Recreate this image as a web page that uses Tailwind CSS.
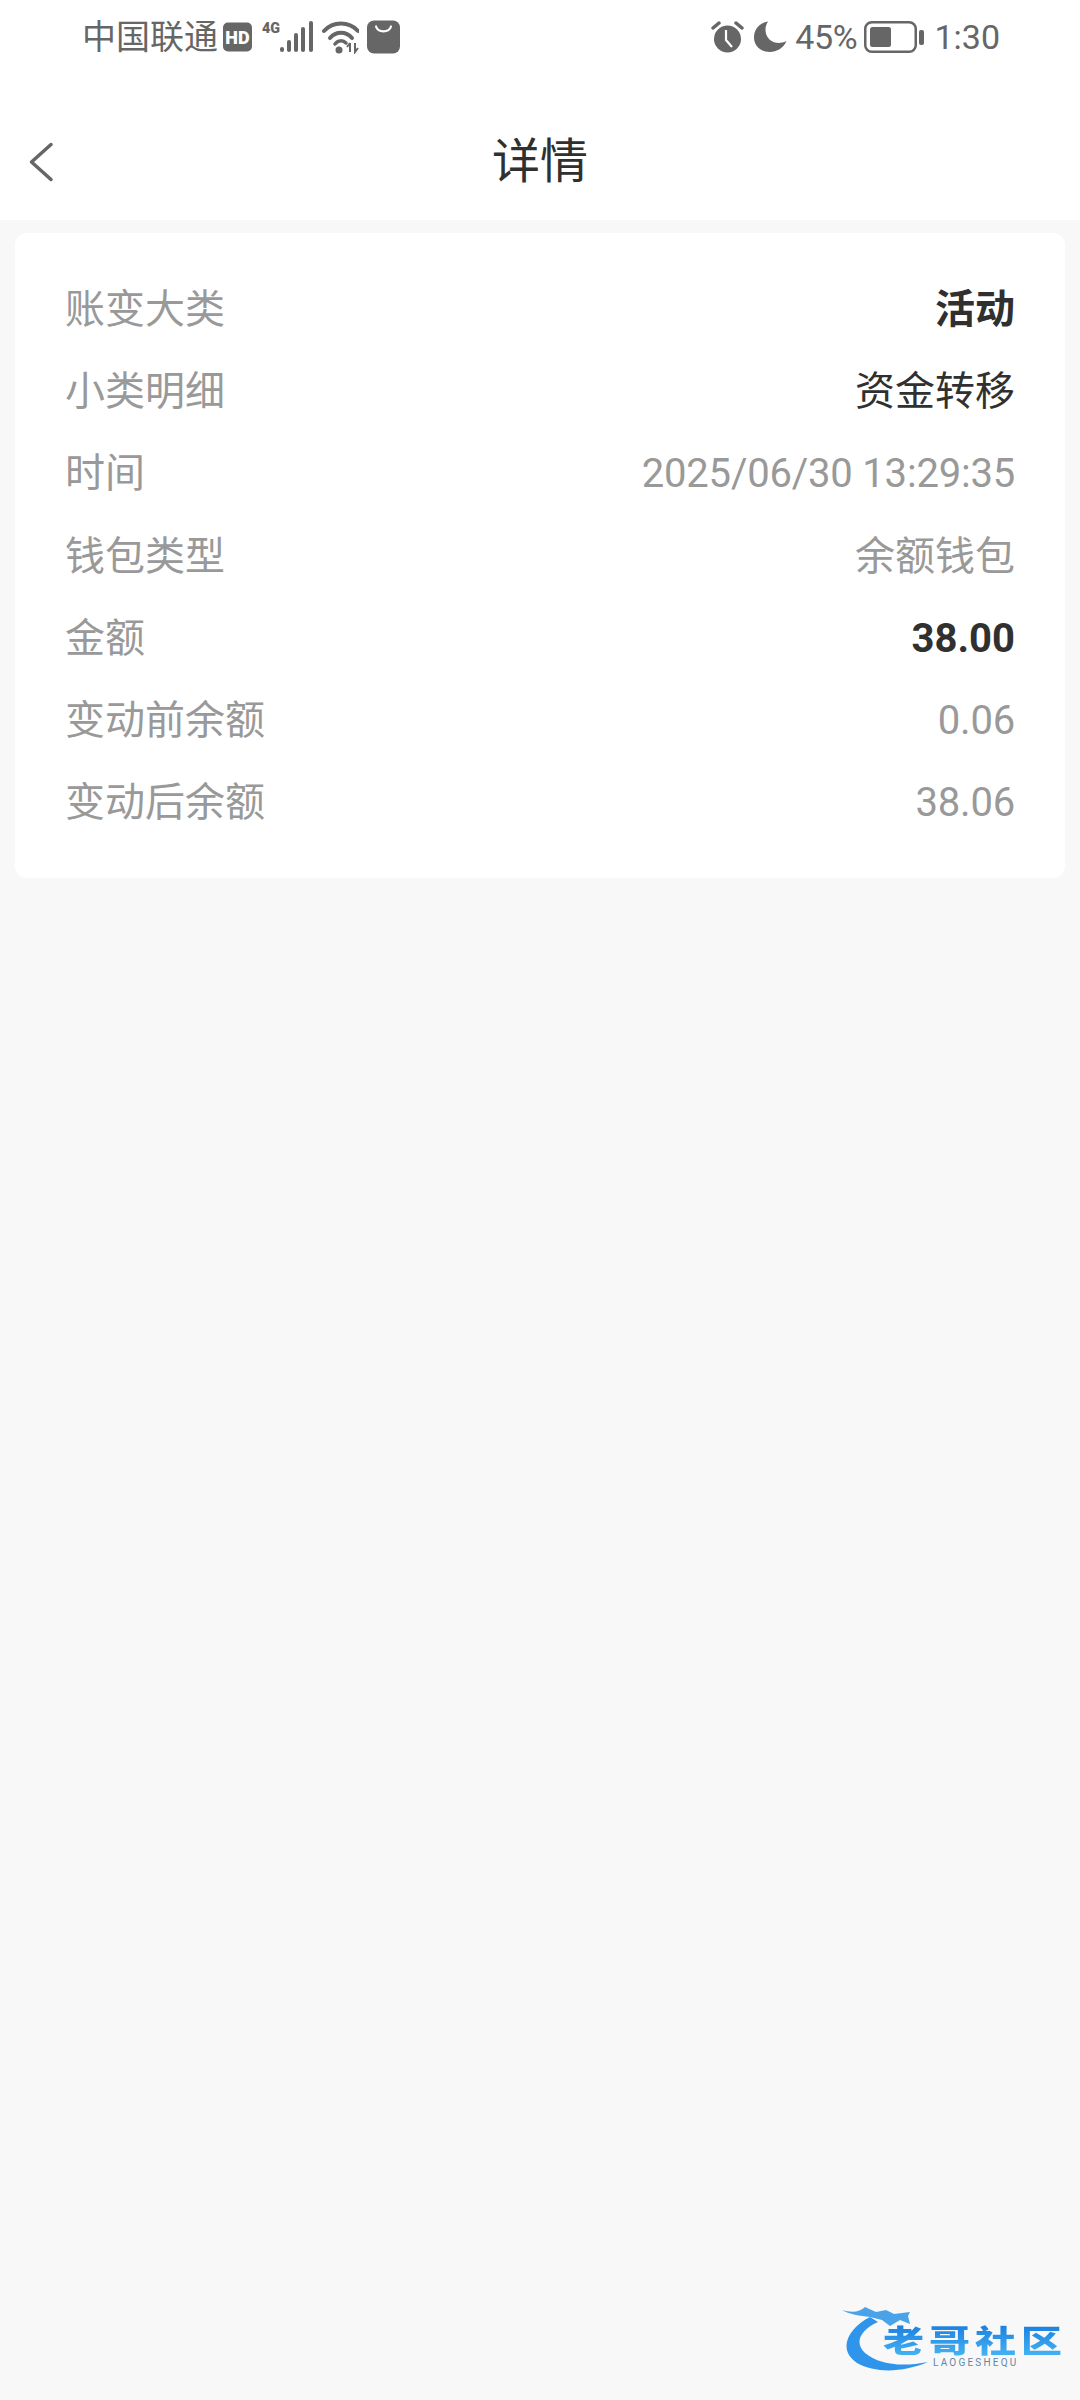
<!DOCTYPE html>
<html lang="zh-CN">
<head>
    <meta charset="UTF-8">
    <meta name="viewport" content="width=device-width, initial-scale=1.0">
    <title>详情</title>
    <script src="https://cdn.jsdelivr.net/npm/@tailwindcss/browser@4"></script>
</head>
<body class="bg-[#f8f8f8] font-['Roboto','Noto_Sans_CJK_SC',sans-serif]">
    <div class="relative h-[2400px] w-[1080px] overflow-hidden">
        <!-- Status bar + title -->
        <header class="h-[220px] bg-white">
            <div class="flex h-[74px] items-center justify-between pl-[82px] pr-[80px] text-[34px] text-[#666666]">
                <div class="flex items-center">
                    <span class="w-[136px] whitespace-nowrap leading-none">中国联通</span>
                    <svg class="ml-[5px]" width="29" height="30" viewBox="0 0 29 30">
                        <rect width="29" height="29" y="0.5" rx="5" fill="#666666"/>
                        <text x="14.5" y="21.500" text-anchor="middle" font-size="18" font-weight="900" font-family="Roboto" fill="#ffffff">HD</text>
                    </svg>
                    <svg class="ml-[10px]" width="52" height="34" viewBox="0 0 52 34">
                        <text x="0" y="13" font-size="15" font-weight="900" font-family="Roboto" textLength="18" lengthAdjust="spacingAndGlyphs" fill="#666666">4G</text>
                        <g stroke="#666666" stroke-width="4" stroke-linecap="round">
                            <path d="M20 29v1"/><path d="M27 22v8"/><path d="M34 15v15"/><path d="M41 9v21"/><path d="M49 3v27"/>
                        </g>
                    </svg>
                    <svg class="ml-[8px]" width="37" height="34" viewBox="0 0 37 34" fill="none">
                        <path d="M2 11C11 1 27 1 36 11" stroke="#666666" stroke-width="4" stroke-linecap="round"/>
                        <path d="M8 18C14 11 24 11 30 18" stroke="#666666" stroke-width="4" stroke-linecap="round"/>
                        <path d="M13 24C16 20 21 20 24 23" stroke="#666666" stroke-width="3.5" stroke-linecap="round"/>
                        <circle cx="17" cy="30" r="3.5" fill="#666666"/>
                        <path d="M28 23v9M25 27l3-4M33 23v9l3-4" stroke="#666666" stroke-width="2"/>
                    </svg>
                    <svg class="ml-[8px]" width="33" height="34" viewBox="0 0 33 34" fill="none">
                        <rect y="0.5" width="33" height="33" rx="7" fill="#666666"/>
                        <path d="M9 6.5C11 13 22 13 24 6.5" stroke="#ffffff" stroke-width="2.200" stroke-linecap="round"/>
                    </svg>
                </div>
                <div class="flex items-center">
                    <svg width="33" height="32" viewBox="0 0 33 32" fill="none">
                        <path d="M2 7l6-5M31 7l-6-5" stroke="#666666" stroke-width="3.5" stroke-linecap="round"/>
                        <circle cx="16.5" cy="18" r="13.5" fill="#666666"/>
                        <path d="M15 9v10l6 7" stroke="#ffffff" stroke-width="2.2"/>
                    </svg>
                    <svg class="ml-[10px]" width="33" height="32" viewBox="0 0 33 32">
                        <path d="M14 0.5C5 2 0 9 0 16.500C0 25 7 31 15.500 31C23 31 29.500 27 32.500 20C24 24 17 21.500 13.500 16C10.500 11 11 5 14 0.5Z" fill="#666666"/>
                    </svg>
                    <span class="ml-[8px] leading-none tracking-[-0.3px]">45%</span>
                    <svg class="ml-[7px]" width="61" height="32" viewBox="0 0 61 32" fill="none">
                        <rect x="1.250" y="1.250" width="50.500" height="29.500" rx="6.500" stroke="#666666" stroke-width="2.500"/>
                        <rect x="6" y="6" width="21" height="20" rx="2.500" fill="#666666"/>
                        <rect x="55" y="9" width="5" height="15" rx="2" fill="#666666"/>
                    </svg>
                    <span class="ml-[9px] leading-none">1:30</span>
                </div>
            </div>
            <div class="relative flex h-[146px] items-center justify-center pt-[30px]">
                <svg class="absolute left-[28px] top-[68px]" width="26" height="40" viewBox="0 0 26 40" fill="none">
                    <path d="M23 2.500L3.500 20L23 37.500" stroke="#666666" stroke-width="3.500" stroke-linecap="round" stroke-linejoin="round"/>
                </svg>
                <h1 class="text-[48px] leading-none text-[#303030]">详情</h1>
            </div>
        </header>

        <!-- Detail card -->
        <section class="mx-[15px] mt-[13px] rounded-[12px] bg-white px-[50px] pb-[34px] pt-[36px] text-[40px] leading-[82.2px] text-[#999999]">
            <div class="flex justify-between"><span>账变大类</span><span class="font-bold text-[#303030]">活动</span></div>
            <div class="flex justify-between"><span>小类明细</span><span class="text-[#303030]">资金转移</span></div>
            <div class="flex justify-between"><span>时间</span><span class="tracking-[-0.2px]">2025/06/30 13:29:35</span></div>
            <div class="flex justify-between"><span>钱包类型</span><span>余额钱包</span></div>
            <div class="flex justify-between"><span>金额</span><span class="font-bold text-[#303030]">38.00</span></div>
            <div class="flex justify-between"><span>变动前余额</span><span class="tracking-[-0.2px]">0.06</span></div>
            <div class="flex justify-between"><span>变动后余额</span><span class="tracking-[-0.2px]">38.06</span></div>
        </section>

        <!-- Watermark -->
        <div class="absolute left-[840px] top-[2302px] h-[80px] w-[230px]">
            <svg class="absolute left-0 top-0" width="100" height="76" viewBox="0 0 100 76" fill="none">
                <path d="M30 15C8 26 -3 48 17 61C35 71 62 71 88 60C62 65 40 63 25 51C14 41 20 28 38 20Z" fill="#2f95ea"/>
                <path d="M2 8C12 11 20 10 25 5L36 10L46 8L54 12L70 10L68 14L70 22L60 18L50 24L42 18L30 15C20 14 9 12 2 8Z" fill="#4aa3e8"/>
            </svg>
            <span class="absolute left-[43px] top-[18px] scale-y-75 whitespace-nowrap bg-linear-to-b from-[#1d7fe0] to-[#45b5f2] bg-clip-text text-[41px] font-black leading-[42px] tracking-[5px] text-transparent">老哥社区</span>
            <span class="absolute left-[93px] top-[55px] whitespace-nowrap text-[10px] leading-[12px] tracking-[2.200px] text-[#5f87a8]">LAOGESHEQU</span>
        </div>
    </div>
</body>
</html>
